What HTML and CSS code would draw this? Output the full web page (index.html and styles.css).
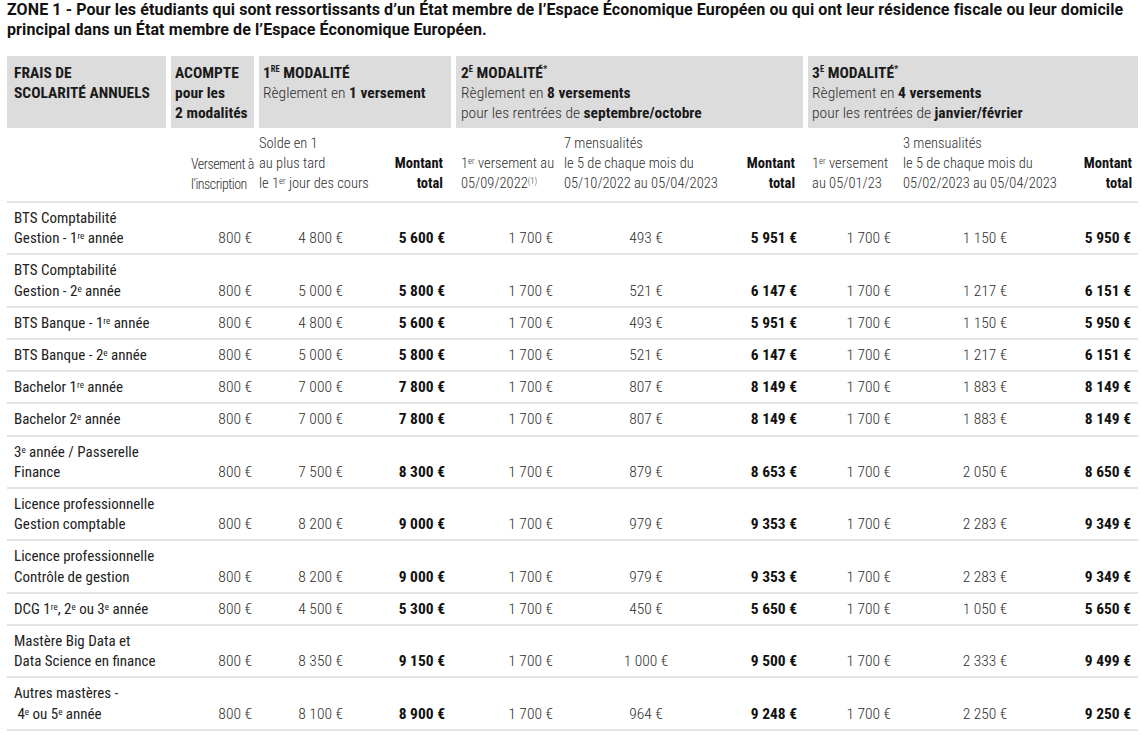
FILE: index.html
```html
<!DOCTYPE html>
<html lang="fr">
<head>
<meta charset="utf-8">
<title>Frais de scolarité - Zone 1</title>
<link rel="stylesheet" href="styles.css">
</head>
<body>
<div class="page">
  <h1 class="title">
    <span class="title-line">ZONE 1 - Pour les étudiants qui sont ressortissants d’un État membre de l’Espace Économique Européen ou qui ont leur résidence fiscale ou leur domicile</span>
    <span class="title-line">principal dans un État membre de l’Espace Économique Européen.</span>
  </h1>

  <table class="fees">
    <colgroup>
      <col class="c1"><col class="c2"><col class="c3"><col class="c4"><col class="c5">
      <col class="c6"><col class="c7"><col class="c8"><col class="c9"><col class="c10">
    </colgroup>
    <thead>
      <tr class="groups">
        <th class="g g1">FRAIS DE<br>SCOLARITÉ ANNUELS</th>
        <th class="g g2">ACOMPTE<br>pour les<br>2 modalités</th>
        <th class="g g3" colspan="2">1<sup class="gs">RE</sup> MODALITÉ<br><span class="reg">Règlement en </span>1 versement</th>
        <th class="g g4" colspan="3">2<sup class="gs">E</sup> MODALITÉ<sup class="star">*</sup><br><span class="reg">Règlement en </span>8 versements<br><span class="reg">pour les rentrées de </span>septembre/octobre</th>
        <th class="g g5" colspan="3">3<sup class="gs">E</sup> MODALITÉ<sup class="star">*</sup><br><span class="reg">Règlement en </span>4 versements<br><span class="reg">pour les rentrées de </span>janvier/février</th>
      </tr>
      <tr class="subs">
        <th class="s s1"></th>
        <th class="s s2">Versement à<br>l’inscription</th>
        <th class="s s3">Solde en 1<br>au plus tard<br>le 1<sup>er</sup> jour des cours</th>
        <th class="s s4 total">Montant<br>total</th>
        <th class="s s5">1<sup>er</sup> versement au<br>05/09/2022<sup>(1)</sup></th>
        <th class="s s6">7 mensualités<br>le 5 de chaque mois du<br>05/10/2022 au 05/04/2023</th>
        <th class="s s7 total">Montant<br>total</th>
        <th class="s s8">1<sup>er</sup> versement<br>au 05/01/23</th>
        <th class="s s9">3 mensualités<br>le 5 de chaque mois du<br>05/02/2023 au 05/04/2023</th>
        <th class="s s10 total">Montant<br>total</th>
      </tr>
    </thead>
    <tbody>
      <tr>
        <th class="name">BTS Comptabilité<br>Gestion - 1<sup>re</sup> année</th>
        <td class="v2">800&nbsp;€</td><td class="v3">4&nbsp;800&nbsp;€</td><td class="v4">5&nbsp;600&nbsp;€</td>
        <td class="v5">1&nbsp;700&nbsp;€</td><td class="v6">493&nbsp;€</td><td class="v7">5&nbsp;951&nbsp;€</td>
        <td class="v8">1&nbsp;700&nbsp;€</td><td class="v9">1&nbsp;150&nbsp;€</td><td class="v10">5&nbsp;950&nbsp;€</td>
      </tr>
      <tr>
        <th class="name">BTS Comptabilité<br>Gestion - 2<sup>e</sup> année</th>
        <td class="v2">800&nbsp;€</td><td class="v3">5&nbsp;000&nbsp;€</td><td class="v4">5&nbsp;800&nbsp;€</td>
        <td class="v5">1&nbsp;700&nbsp;€</td><td class="v6">521&nbsp;€</td><td class="v7">6&nbsp;147&nbsp;€</td>
        <td class="v8">1&nbsp;700&nbsp;€</td><td class="v9">1&nbsp;217&nbsp;€</td><td class="v10">6&nbsp;151&nbsp;€</td>
      </tr>
      <tr>
        <th class="name">BTS Banque - 1<sup>re</sup> année</th>
        <td class="v2">800&nbsp;€</td><td class="v3">4&nbsp;800&nbsp;€</td><td class="v4">5&nbsp;600&nbsp;€</td>
        <td class="v5">1&nbsp;700&nbsp;€</td><td class="v6">493&nbsp;€</td><td class="v7">5&nbsp;951&nbsp;€</td>
        <td class="v8">1&nbsp;700&nbsp;€</td><td class="v9">1&nbsp;150&nbsp;€</td><td class="v10">5&nbsp;950&nbsp;€</td>
      </tr>
      <tr>
        <th class="name">BTS Banque - 2<sup>e</sup> année</th>
        <td class="v2">800&nbsp;€</td><td class="v3">5&nbsp;000&nbsp;€</td><td class="v4">5&nbsp;800&nbsp;€</td>
        <td class="v5">1&nbsp;700&nbsp;€</td><td class="v6">521&nbsp;€</td><td class="v7">6&nbsp;147&nbsp;€</td>
        <td class="v8">1&nbsp;700&nbsp;€</td><td class="v9">1&nbsp;217&nbsp;€</td><td class="v10">6&nbsp;151&nbsp;€</td>
      </tr>
      <tr>
        <th class="name">Bachelor 1<sup>re</sup> année</th>
        <td class="v2">800&nbsp;€</td><td class="v3">7&nbsp;000&nbsp;€</td><td class="v4">7&nbsp;800&nbsp;€</td>
        <td class="v5">1&nbsp;700&nbsp;€</td><td class="v6">807&nbsp;€</td><td class="v7">8&nbsp;149&nbsp;€</td>
        <td class="v8">1&nbsp;700&nbsp;€</td><td class="v9">1&nbsp;883&nbsp;€</td><td class="v10">8&nbsp;149&nbsp;€</td>
      </tr>
      <tr>
        <th class="name">Bachelor 2<sup>e</sup> année</th>
        <td class="v2">800&nbsp;€</td><td class="v3">7&nbsp;000&nbsp;€</td><td class="v4">7&nbsp;800&nbsp;€</td>
        <td class="v5">1&nbsp;700&nbsp;€</td><td class="v6">807&nbsp;€</td><td class="v7">8&nbsp;149&nbsp;€</td>
        <td class="v8">1&nbsp;700&nbsp;€</td><td class="v9">1&nbsp;883&nbsp;€</td><td class="v10">8&nbsp;149&nbsp;€</td>
      </tr>
      <tr>
        <th class="name">3<sup>e</sup> année / Passerelle<br>Finance</th>
        <td class="v2">800&nbsp;€</td><td class="v3">7&nbsp;500&nbsp;€</td><td class="v4">8&nbsp;300&nbsp;€</td>
        <td class="v5">1&nbsp;700&nbsp;€</td><td class="v6">879&nbsp;€</td><td class="v7">8&nbsp;653&nbsp;€</td>
        <td class="v8">1&nbsp;700&nbsp;€</td><td class="v9">2&nbsp;050&nbsp;€</td><td class="v10">8&nbsp;650&nbsp;€</td>
      </tr>
      <tr>
        <th class="name">Licence professionnelle<br>Gestion comptable</th>
        <td class="v2">800&nbsp;€</td><td class="v3">8&nbsp;200&nbsp;€</td><td class="v4">9&nbsp;000&nbsp;€</td>
        <td class="v5">1&nbsp;700&nbsp;€</td><td class="v6">979&nbsp;€</td><td class="v7">9&nbsp;353&nbsp;€</td>
        <td class="v8">1&nbsp;700&nbsp;€</td><td class="v9">2&nbsp;283&nbsp;€</td><td class="v10">9&nbsp;349&nbsp;€</td>
      </tr>
      <tr>
        <th class="name">Licence professionnelle<br>Contrôle de gestion</th>
        <td class="v2">800&nbsp;€</td><td class="v3">8&nbsp;200&nbsp;€</td><td class="v4">9&nbsp;000&nbsp;€</td>
        <td class="v5">1&nbsp;700&nbsp;€</td><td class="v6">979&nbsp;€</td><td class="v7">9&nbsp;353&nbsp;€</td>
        <td class="v8">1&nbsp;700&nbsp;€</td><td class="v9">2&nbsp;283&nbsp;€</td><td class="v10">9&nbsp;349&nbsp;€</td>
      </tr>
      <tr>
        <th class="name">DCG 1<sup>re</sup>, 2<sup>e</sup> ou 3<sup>e</sup> année</th>
        <td class="v2">800&nbsp;€</td><td class="v3">4&nbsp;500&nbsp;€</td><td class="v4">5&nbsp;300&nbsp;€</td>
        <td class="v5">1&nbsp;700&nbsp;€</td><td class="v6">450&nbsp;€</td><td class="v7">5&nbsp;650&nbsp;€</td>
        <td class="v8">1&nbsp;700&nbsp;€</td><td class="v9">1&nbsp;050&nbsp;€</td><td class="v10">5&nbsp;650&nbsp;€</td>
      </tr>
      <tr>
        <th class="name">Mastère Big Data et<br>Data Science en finance</th>
        <td class="v2">800&nbsp;€</td><td class="v3">8&nbsp;350&nbsp;€</td><td class="v4">9&nbsp;150&nbsp;€</td>
        <td class="v5">1&nbsp;700&nbsp;€</td><td class="v6">1&nbsp;000&nbsp;€</td><td class="v7">9&nbsp;500&nbsp;€</td>
        <td class="v8">1&nbsp;700&nbsp;€</td><td class="v9">2&nbsp;333&nbsp;€</td><td class="v10">9&nbsp;499&nbsp;€</td>
      </tr>
      <tr>
        <th class="name">Autres mastères -<br>&nbsp;4<sup>e</sup> ou 5<sup>e</sup> année</th>
        <td class="v2">800&nbsp;€</td><td class="v3">8&nbsp;100&nbsp;€</td><td class="v4">8&nbsp;900&nbsp;€</td>
        <td class="v5">1&nbsp;700&nbsp;€</td><td class="v6">964&nbsp;€</td><td class="v7">9&nbsp;248&nbsp;€</td>
        <td class="v8">1&nbsp;700&nbsp;€</td><td class="v9">2&nbsp;250&nbsp;€</td><td class="v10">9&nbsp;250&nbsp;€</td>
      </tr>
    </tbody>
  </table>
</div>
</body>
</html>
```

FILE: styles.css
```css
html, body {
  margin: 0;
  padding: 0;
  background: #ffffff;
}

body {
  font-family: "Roboto Condensed", "Roboto", "Liberation Sans", Arial, sans-serif;
  font-stretch: condensed;
  color: #333333;
}

.page {
  padding: 0 0 0 7px;
}

.title {
  margin: 0;
  font-family: "Roboto", "Liberation Sans", Arial, sans-serif;
  font-stretch: normal;
  font-size: 16px;
  line-height: 20px;
  font-weight: bold;
  letter-spacing: 0.1px;
  color: #111111;
}

.title-line {
  display: block;
  white-space: nowrap;
}

.fees {
  margin-top: 16px;
  width: 1131px;
  table-layout: fixed;
  border-collapse: separate;
  border-spacing: 0;
  font-size: 14.5px;
}

.c1 { width: 164px; }
.c2 { width: 88px; }
.c3 { width: 121px; }
.c4 { width: 76px; }
.c5 { width: 104px; }
.c6 { width: 180px; }
.c7 { width: 68px; }
.c8 { width: 92px; }
.c9 { width: 175px; }
.c10 { width: 63px; }

sup {
  font-size: 0.6em;
  line-height: 0;
  vertical-align: 0.5em;
}

/* group header band */
.g {
  background: #dcdcdc;
  background-clip: padding-box;
  border-right: 5px solid #ffffff;
  text-align: left;
  vertical-align: top;
  font-size: 15.5px;
  font-weight: bold;
  color: #1a1a1a;
  line-height: 20px;
  padding: 7px 4px 5px 4px;
  height: 60px;
  white-space: nowrap;
}
.g1 { padding-left: 7px; }
.g4 { padding-left: 5px; }
.g5 { border-right: 0; }
.g .reg { font-weight: 300; color: #2e2e2e; }
.g .gs { font-size: 0.55em; vertical-align: 0.65em; }
.g .star { font-size: 0.6em; vertical-align: 0.7em; }

/* sub header row */
.s {
  font-weight: 300;
  text-align: left;
  vertical-align: bottom;
  line-height: 20px;
  padding: 6px 0 7px 0;
  border-bottom: 2px solid #e3e3e3;
  white-space: nowrap;
  color: #2e2e2e;
}
.s.total {
  font-weight: bold;
  text-align: right;
  color: #111111;
}
.s2 {
  padding-left: 20px;
  font-size: 14px;
  letter-spacing: -0.5px;
}
.s3 { padding-left: 0; }
.s4 { padding-right: 13px; }
.s5 { padding-left: 5px; }
.s6 { padding-left: 4px; }
.s7 { padding-right: 13px; }
.s8 { padding-left: 4px; }
.s9 { padding-left: 3px; }
.s10 { padding-right: 6px; }

/* body rows */
tbody th,
tbody td {
  line-height: 20.2px;
  padding: 5px 0;
  border-bottom: 2px solid #e3e3e3;
  vertical-align: bottom;
  white-space: nowrap;
}

.name {
  text-align: left;
  font-weight: normal;
  font-size: 15px;
  padding-left: 7px;
  color: #222222;
}

tbody td {
  text-align: right;
  font-size: 15.5px;
  font-weight: 300;
  color: #2e2e2e;
}

.v2 { padding-right: 7px; }
.v3 { padding-right: 37px; }
.v4 { padding-right: 11px; }
.v5 { padding-right: 7px; }
.v6 { text-align: center; padding-left: 4px; padding-right: 12px; }
.v7 { padding-right: 11px; }
.v8 { padding-right: 9px; }
.v9 { text-align: center; padding-left: 3px; padding-right: 8px; }
.v10 { padding-right: 7px; }

.v4, .v7, .v10 {
  font-weight: bold;
  color: #111111;
}
```
